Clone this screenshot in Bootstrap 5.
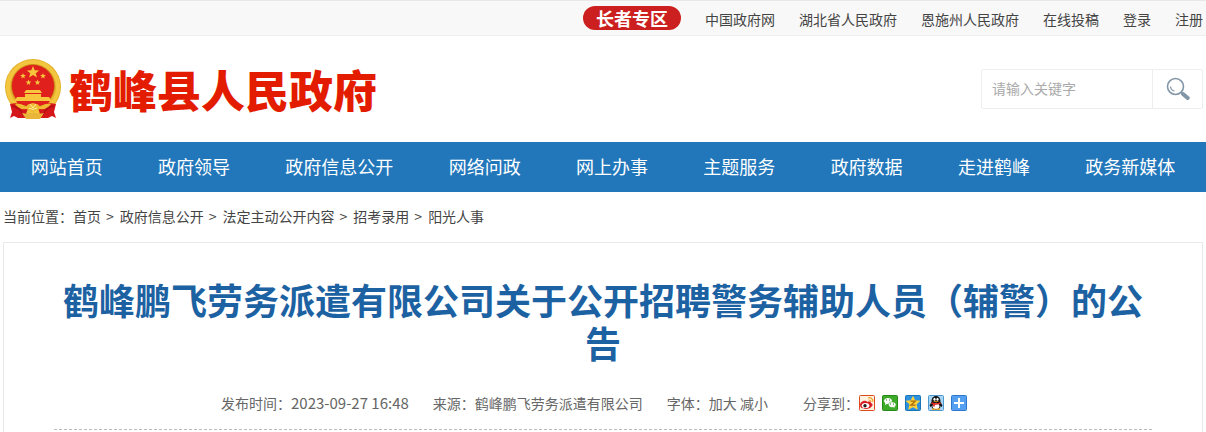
<!DOCTYPE html>
<html lang="zh-CN">
<head>
<meta charset="utf-8">
<meta name="viewport" content="width=device-width, initial-scale=1">
<title>鹤峰县人民政府</title>
<link href="https://cdn.jsdelivr.net/npm/bootstrap@5.3.0/dist/css/bootstrap.min.css" rel="stylesheet">
<style>
body{font-family:"Noto Sans CJK SC",sans-serif;font-size:14px;line-height:20px;color:#444;background:#fff}
a{color:inherit;text-decoration:none}
.site-width{max-width:1206px;padding:0 3px;margin:0 auto;width:100%}
.topbar{background:#f8f8f8;border-top:1px solid #e8e8e8;border-bottom:1px solid #eee}
.topbar .site-width{min-height:34px;column-gap:24px}
.topbar a{line-height:22px;padding-top:2px}
.topbar .elder{background:#cc1f1f;color:#fff;font-size:18px;font-weight:700;line-height:24px;padding:0 13px}
.masthead{min-height:106px}
.brand{gap:6px}
.emblem{width:60px;height:62px}
.brand-name{font-size:44px;line-height:48px;font-weight:900;color:#e31c00}
.search-box{width:222px;height:40px;border:1px solid #eee;border-radius:2px}
.search-box input{border:0;padding:0 10px 2px;font-size:14px;min-width:0;outline-offset:-2px}
.search-box input::placeholder{color:#aaa}
.search-box button{width:50px;border:0;border-left:1px solid #eee;background:#fff;padding:0}
.mainnav{background:#2277bb;color:#fff;font-size:18px;line-height:48px;padding-bottom:2px}
.crumbs{line-height:24px;padding:12px 0 14px}
.crumbs .breadcrumb-item{padding:0}
.crumbs .breadcrumb-item + .breadcrumb-item::before{content:">";color:inherit;padding:0 6px 0 5px;float:none}
.article{border:1px solid #e9e9e9;border-bottom:0;padding:35px 50px 0}
.headline{font-size:36px;line-height:43px;font-weight:700;color:#1c62a3;margin:0 0 27px}
.meta{color:#666;line-height:24px;padding:0 18px 14px 0;border-bottom:1px dashed #bbb;column-gap:24px}
.date{font-size:15px}
.share{margin-left:11px}
.share-icons{gap:7px}
.share svg{width:16px;height:16px;display:block}
</style>
</head>
<body class="d-flex flex-column min-vh-100">
<div class="topbar">
  <div class="site-width d-flex flex-wrap justify-content-end align-items-center">
    <a class="elder rounded-pill" href="#">长者专区</a>
    <a href="#">中国政府网</a>
    <a href="#">湖北省人民政府</a>
    <a href="#">恩施州人民政府</a>
    <a href="#">在线投稿</a>
    <a href="#">登录</a>
    <a href="#">注册</a>
  </div>
</div>
<header class="masthead site-width d-flex flex-wrap justify-content-between align-items-center">
  <a class="brand d-flex align-items-center" href="#">
    <svg class="emblem" viewBox="0 0 60 62" aria-hidden="true">
      <circle cx="30" cy="29" r="28" fill="#e5b02c"/>
      <circle cx="30" cy="29" r="25" fill="none" stroke="#f3c640" stroke-width="4"/>
      <circle cx="30" cy="28" r="21.500" fill="#df201c" stroke="#c78b12" stroke-width=".7"/>
      <g fill="#f7c63c">
        <path d="M30 8l1.700 4.200 4.500.2-3.500 2.800 1.300 4.400-4-2.600-4 2.600 1.300-4.400-3.500-2.800 4.500-.2z"/>
        <path d="M20 15l.8 2 2.100.1-1.700 1.300.6 2.100-1.800-1.200-1.800 1.200.6-2.100-1.700-1.300 2.100-.1zM40 15l.8 2 2.100.1-1.700 1.300.6 2.100-1.800-1.200-1.800 1.200.6-2.100-1.700-1.300 2.100-.1zM25.500 21.500l.8 2 2.100.1-1.700 1.300.6 2.100-1.800-1.200-1.800 1.200.6-2.100-1.700-1.300 2.100-.1zM34.500 21.500l.8 2 2.100.1-1.700 1.300.6 2.100-1.800-1.200-1.800 1.200.6-2.100-1.700-1.300 2.100-.1z"/>
        <path d="M23 32h14l2 3H21zM22 36h16v3h8l3 5H11l3-5h8z"/>
      </g>
      <path d="M13 43h34l-3 4H16z" fill="#df201c"/>
      <path d="M7 46c7-2 12 0 16 4l-1 10h-7l-4-2-4 2 2-6zM53 46c-7-2-12 0-16 4l1 10h7l4-2 4 2-2-6z" fill="#d5171a"/>
      <path d="M9 48q8 1 11 9M51 48q-8 1-11 9" fill="none" stroke="#9f1014" stroke-width="1.200"/>
      <path d="M15 47c5 0 7 3 10 3l-2 6 7 1 7-1-2-6c3 0 5-3 10-3l-4 7-3 6H22l-3-6z" fill="#d5171a"/>
      <path d="M12 46c6-1 8 1 11 3 2-4 5-3 7-4 2 1 5 0 7 4 3-2 5-4 11-3-3 4-7 6-11 5-3 0-4 3-7 3s-4-3-7-3c-4 1-8-1-11-5z" fill="#efb931"/>
      <path d="M27 46l3 4 3-4M26 50q4 3 8 0" fill="none" stroke="#fff0a2"/>
      <path d="M19 55l6 1q5-3 10 0l6-1-4 6H23z" fill="#eab63a"/>
    </svg>
    <span class="brand-name">鹤峰县人民政府</span>
  </a>
  <form class="search-box d-flex" role="search" onsubmit="return false">
    <input class="flex-grow-1" type="text" placeholder="请输入关键字" aria-label="请输入关键字">
    <button type="submit" aria-label="搜索" class="flex-shrink-0">
      <svg width="24" height="24" viewBox="0 0 24 24" fill="none" stroke="#8296a8" aria-hidden="true"><circle cx="9.500" cy="9.500" r="8" stroke-width="1.600"/><path d="M4.500 9.500a5 5 0 0 0 4 4.500" stroke-width="1.200"/><path d="M15.200 15.200l1.800 1.800" stroke-width="1.800"/><path d="M17 17l4.700 4" stroke-width="4" stroke-linecap="round"/></svg>
    </button>
  </form>
</header>
<nav class="mainnav">
  <div class="site-width d-flex flex-wrap justify-content-around">
    <a href="#">网站首页</a><a href="#">政府领导</a><a href="#">政府信息公开</a><a href="#">网络问政</a><a href="#">网上办事</a><a href="#">主题服务</a><a href="#">政府数据</a><a href="#">走进鹤峰</a><a href="#">政务新媒体</a>
  </div>
</nav>
<main class="site-width d-flex flex-column flex-grow-1">
  <nav class="crumbs d-flex flex-wrap" aria-label="当前位置">
    <span>当前位置：</span>
    <ol class="breadcrumb mb-0">
      <li class="breadcrumb-item"><a href="#">首页</a></li>
      <li class="breadcrumb-item"><a href="#">政府信息公开</a></li>
      <li class="breadcrumb-item"><a href="#">法定主动公开内容</a></li>
      <li class="breadcrumb-item"><a href="#">招考录用</a></li>
      <li class="breadcrumb-item"><a href="#">阳光人事</a></li>
    </ol>
  </nav>
  <article class="article flex-grow-1">
    <h1 class="headline text-center">鹤峰鹏飞劳务派遣有限公司关于公开招聘警务辅助人员（辅警）的公告</h1>
    <div class="meta d-flex flex-wrap justify-content-center">
      <span>发布时间：<time class="date" datetime="2023-09-27T16:48">2023-09-27 16:48</time></span>
      <span>来源：鹤峰鹏飞劳务派遣有限公司</span>
      <span>字体：<a href="#">加大</a> <a href="#">减小</a></span>
      <div class="share d-flex align-items-center">
        <span>分享到：</span>
        <div class="share-icons d-flex">
          <a href="#" aria-label="新浪微博"><svg viewBox="0 0 16 16"><rect x=".5" y=".5" width="15" height="15" rx="1" fill="#fff3df" stroke="#dd4a20"/><path d="M1 10c0-3 4-5 6-4 1 0 1 1 1 1 3-1 4 0 4 1 2 1 2 2 1 3-2 4-12 4-12-1z" fill="#d91f26"/><ellipse cx="6.500" cy="10.500" rx="3.800" ry="2.600" fill="#fff"/><circle cx="6" cy="10.700" r="1.700" fill="#222"/><path d="M9 3c3-1 5 1 5 4M9.500 5c2 0 2.500 1 2.500 2" fill="none" stroke="#f6a228" stroke-width="1.200"/></svg></a>
          <a href="#" aria-label="微信"><svg viewBox="0 0 16 16"><rect x=".5" y=".5" width="15" height="15" rx="1" fill="#3dab29" stroke="#258a18"/><path d="M2 6c0-4 8-4 8 0s-4 3-5 3l-2 1 .3-2Q2 7 2 6z" fill="#fff"/><path d="M6.500 9.500c0-3.500 7.500-3.500 7.500 0 0 1-.5 2-1.300 2.500l.3 1.500-1.500-1c-3 .5-5-1-5-3z" fill="#fff" stroke="#3dab29" stroke-width=".6"/><path d="M4 5h1m2 0h1m0 4h1m2 0h1" stroke="#258a18"/></svg></a>
          <a href="#" aria-label="QQ空间"><svg viewBox="0 0 16 16"><rect x=".5" y=".5" width="15" height="15" rx="1" fill="#2d91dc" stroke="#1674b8"/><path d="M8 .8l2.200 4.400 5.300.6-3.900 3.500 1.200 5.500L8 12.200l-4.800 2.600 1.200-5.500L.5 5.800l5.300-.6z" fill="#ffd23a"/><path d="M5.500 6.200h4.800l-4.500 4h4.700" fill="none" stroke="#a96a0b" stroke-width="1.200"/></svg></a>
          <a href="#" aria-label="QQ好友"><svg viewBox="0 0 16 16"><rect x=".5" y=".5" width="15" height="15" rx="1" fill="#a9d5f4" stroke="#4b98d2"/><path d="M3.500 7c-.5-8 9.500-8 9 0l2 3.500-1 1.500-1-1c0 5-9 5-9 0l-1 1-1-1.500z" fill="#151515"/><ellipse cx="8" cy="11.200" rx="3.400" ry="3" fill="#fff"/><ellipse cx="6.500" cy="4.200" rx="1.100" ry="1.500" fill="#fff"/><ellipse cx="9.500" cy="4.200" rx="1.100" ry="1.500" fill="#fff"/><path d="M5 6.300h6q-3 2-6 0z" fill="#f5a31f"/><path d="M3.500 8q4.500 2 9 0M6 9v2.500" fill="none" stroke="#df2525" stroke-width="1.700"/><path d="M4 14.300h3.500m1 0H12" stroke="#f5a31f" stroke-width="1.400"/></svg></a>
          <a href="#" aria-label="更多"><svg viewBox="0 0 16 16"><rect x=".5" y=".5" width="15" height="15" rx="1" fill="#559ff0" stroke="#2e78cb"/><path d="M8 3v10M3 8h10" stroke="#fff" stroke-width="2"/></svg></a>
        </div>
      </div>
    </div>
  </article>
</main>
<script src="https://cdn.jsdelivr.net/npm/bootstrap@5.3.0/dist/js/bootstrap.bundle.min.js"></script>
</body>
</html>
